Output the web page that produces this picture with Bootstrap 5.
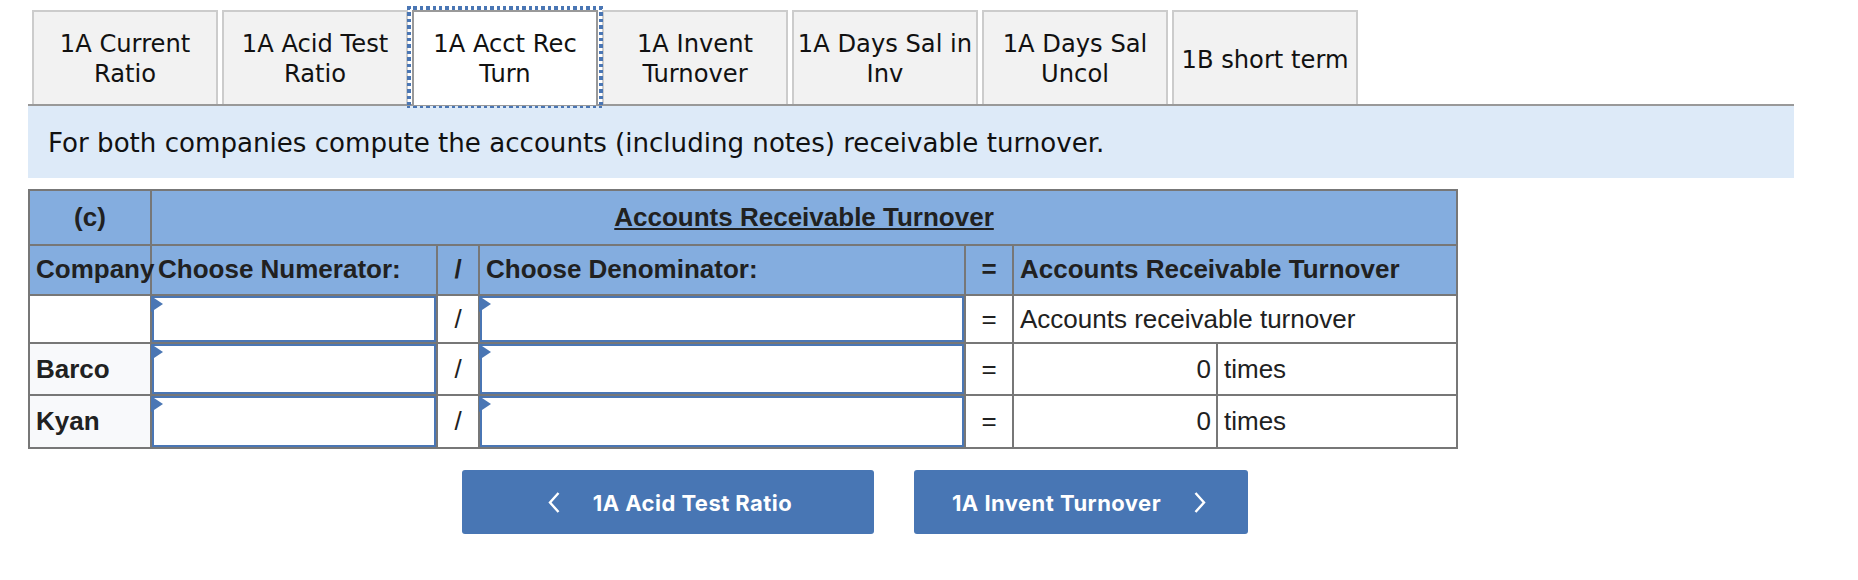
<!DOCTYPE html>
<html lang="en">
<head>
<meta charset="utf-8">
<title>Accounts Receivable Turnover</title>
<link rel="stylesheet" href="https://cdn.jsdelivr.net/npm/bootstrap@5.3.0/dist/css/bootstrap.min.css">
<style>
html,body{background:#fff;margin:0;padding:0}
.wk-page{padding:10px 0 0 28px;width:1794px;color:#212121;font-family:"Liberation Sans",Arial,sans-serif}
.wk-tabs{padding-left:4px;gap:4px;border-bottom:0;flex-wrap:nowrap}
.wk-tabs .nav-item{margin:0}
.wk-tabs .nav-link{width:186px;height:95px;padding:0 2px;margin:0;background:#f2f2f2;border:2px solid #ccc;border-bottom:0;border-radius:0;color:#111;font-family:"DejaVu Sans",Verdana,sans-serif;font-size:24.2px;line-height:30px;display:flex;align-items:center;justify-content:center;text-align:center}
.wk-tabs .nav-link.wk-single{padding-top:2px}
.wk-tabs .nav-link.active{background:#fff;border-color:#999;color:#111;position:relative;z-index:2}
.wk-tabs .nav-link.active::after{content:"";position:absolute;left:-7px;right:-7px;top:-6px;bottom:-3px;pointer-events:none;
  background:
   repeating-linear-gradient(90deg,#4a76b4 0 3.4px,transparent 3.4px 6.4px) top left/100% 4px no-repeat,
   repeating-linear-gradient(90deg,#4a76b4 0 3.4px,transparent 3.4px 6.4px) bottom left/100% 2px no-repeat,
   repeating-linear-gradient(180deg,#4a76b4 0 3.4px,transparent 3.4px 6.4px) top left/4px 100% no-repeat,
   repeating-linear-gradient(180deg,#4a76b4 0 3.4px,transparent 3.4px 6.4px) top right/4px 100% no-repeat}
.wk-prompt{background:#ddeaf8;border-top:2px solid #999;height:74px;margin-top:-1px;padding:3px 0 0 20px;display:flex;align-items:center;font-family:"DejaVu Sans",Verdana,sans-serif;font-size:26.1px;color:#111;position:relative;z-index:1}
.table.wk-table{width:1428px;table-layout:fixed;border-collapse:collapse;margin:11px 0 0 0;font-size:26px;color:#212121}
.table.wk-table>tbody>tr>*{border:2px solid #777;padding:0 6px;vertical-align:middle;color:#212121;box-shadow:none;background:transparent;line-height:30px}
.table.wk-table>tbody>tr>*.wk-head{background:#84addf;font-weight:700;padding-bottom:2px}
.table.wk-table>tbody>tr>*.wk-name{background:#f8f9fb;font-weight:700}
.table.wk-table>tbody>tr>*.wk-slot{padding:0}
.table.wk-table>tbody>tr>*.wk-num{padding-right:5px}
.table.wk-table>tbody>.wk-r5>*{padding-bottom:2px}
.wk-table .wk-r1{height:55px}.wk-table .wk-r2{height:50px}.wk-table .wk-r3{height:48px}.wk-table .wk-r4{height:52px}.wk-table .wk-r5{height:53px}
.wk-slot-inner{position:relative}
.wk-slot-inner::before{content:"";position:absolute;left:-1px;top:0;border-left:12px solid #4a76b4;border-top:8px solid transparent;border-bottom:8px solid transparent}
.wk-field{display:block;width:100%;height:100%;border:2px solid #4a76b4;border-radius:0;padding:0;background:#fff}
.wk-r3 .wk-slot-inner{height:46px}.wk-r4 .wk-slot-inner{height:50px}.wk-r5 .wk-slot-inner{height:51px}
.wk-actions{margin:21px 0 0 434px;gap:40px}
.wk-go{height:64px;background:#4876b4;border:0;border-radius:3px;color:#fff;font-family:Inter,"Liberation Sans",sans-serif;font-weight:700;font-size:22px;letter-spacing:.45px;display:flex;align-items:center;justify-content:center;padding:3px 0 0}
.wk-go:hover,.wk-go:focus{background:#4876b4;color:#fff}
.wk-prev{width:412px;gap:33px;padding-left:4px}
.wk-next{width:334px;gap:33px;padding-right:4px}
.wk-go svg{display:block;margin-top:-2px}
</style>
</head>
<body>
<div class="wk-page">
  <ul class="nav nav-tabs wk-tabs">
    <li class="nav-item"><a class="nav-link" href="#">1A Current<br>Ratio</a></li>
    <li class="nav-item"><a class="nav-link" href="#">1A Acid Test<br>Ratio</a></li>
    <li class="nav-item"><a class="nav-link active" href="#">1A Acct Rec<br>Turn</a></li>
    <li class="nav-item"><a class="nav-link" href="#">1A Invent<br>Turnover</a></li>
    <li class="nav-item"><a class="nav-link" href="#">1A Days Sal in<br>Inv</a></li>
    <li class="nav-item"><a class="nav-link" href="#">1A Days Sal<br>Uncol</a></li>
    <li class="nav-item"><a class="nav-link wk-single" href="#">1B short term</a></li>
  </ul>
  <div class="wk-prompt">For both companies compute the accounts (including notes) receivable turnover.</div>
  <table class="table wk-table">
    <colgroup><col style="width:122px"><col style="width:286px"><col style="width:42px"><col style="width:486px"><col style="width:48px"><col style="width:204px"><col style="width:240px"></colgroup>
    <tbody>
      <tr class="wk-r1"><th class="wk-head text-center">(c)</th><th class="wk-head text-center text-decoration-underline" colspan="6">Accounts Receivable Turnover</th></tr>
      <tr class="wk-r2"><th class="wk-head text-nowrap">Company</th><th class="wk-head text-nowrap">Choose Numerator:</th><th class="wk-head text-center">/</th><th class="wk-head">Choose Denominator:</th><th class="wk-head text-center">=</th><th class="wk-head text-nowrap" colspan="2">Accounts Receivable Turnover</th></tr>
      <tr class="wk-r3"><td></td><td class="wk-slot"><div class="wk-slot-inner"><input class="wk-field" aria-label="Numerator"></div></td><td class="text-center">/</td><td class="wk-slot"><div class="wk-slot-inner"><input class="wk-field" aria-label="Denominator"></div></td><td class="text-center">=</td><td colspan="2">Accounts receivable turnover</td></tr>
      <tr class="wk-r4"><td class="wk-name">Barco</td><td class="wk-slot"><div class="wk-slot-inner"><input class="wk-field" aria-label="Barco numerator"></div></td><td class="text-center">/</td><td class="wk-slot"><div class="wk-slot-inner"><input class="wk-field" aria-label="Barco denominator"></div></td><td class="text-center">=</td><td class="text-end wk-num">0</td><td>times</td></tr>
      <tr class="wk-r5"><td class="wk-name">Kyan</td><td class="wk-slot"><div class="wk-slot-inner"><input class="wk-field" aria-label="Kyan numerator"></div></td><td class="text-center">/</td><td class="wk-slot"><div class="wk-slot-inner"><input class="wk-field" aria-label="Kyan denominator"></div></td><td class="text-center">=</td><td class="text-end wk-num">0</td><td>times</td></tr>
    </tbody>
  </table>
  <div class="d-flex wk-actions">
    <button class="btn wk-go wk-prev" type="button"><svg width="12" height="21" viewBox="0 0 12 21" fill="none" stroke="#fff" stroke-width="2.4"><path d="M10.5 1 2 10.5 10.5 20"/></svg><span>1A Acid Test Ratio</span></button>
    <button class="btn wk-go wk-next" type="button"><span>1A Invent Turnover</span><svg width="12" height="21" viewBox="0 0 12 21" fill="none" stroke="#fff" stroke-width="2.4"><path d="M1.5 1 10 10.5 1.5 20"/></svg></button>
  </div>
</div>
<script src="https://cdn.jsdelivr.net/npm/bootstrap@5.3.0/dist/js/bootstrap.bundle.min.js"></script>
</body>
</html>
